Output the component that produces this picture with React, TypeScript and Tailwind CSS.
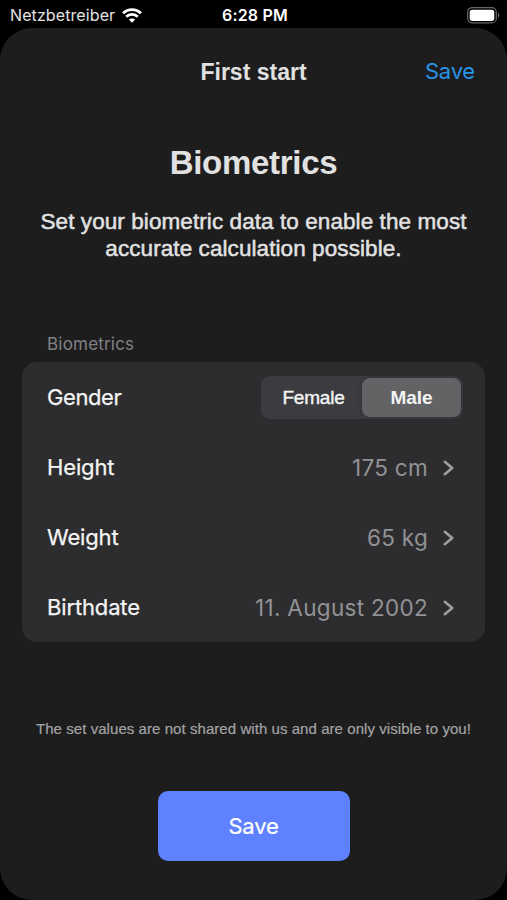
import { useState } from "react";

type RowProps = {
  label: string;
  value: string;
};

const rows: RowProps[] = [
  { label: "Height", value: "175 cm" },
  { label: "Weight", value: "65 kg" },
  { label: "Birthdate", value: "11. August 2002" },
];

function StatusBar() {
  return (
    <div className="grid h-7 grid-cols-3 items-center pt-[2px] pl-[10px] pr-[7px] text-[16px] text-white">
      <div className="flex items-center gap-[7px] whitespace-nowrap">
        <span className="tracking-[0.1px] text-[#e4e4e4]">Netzbetreiber</span>
        <svg width="20" height="15" viewBox="0 0 20 15" fill="none" stroke="white" strokeWidth="2.8">
          <path d="M1 5.3C6 .3 14 .3 19 5.3" />
          <path d="M4.2 8.7c3.3-3.2 8.3-3.2 11.6 0" />
          <path d="M10 14.7 6.9 11.6c1.8-1.6 4.4-1.6 6.2 0Z" fill="white" stroke="none" />
        </svg>
      </div>
      <span className="text-center font-semibold tracking-[0.2px]">6:28 PM</span>
      <svg className="justify-self-end" width="33" height="17" viewBox="0 0 33 17">
        <rect x=".7" y=".7" width="28.6" height="15.2" rx="4.5" fill="none" stroke="#666" strokeWidth="1.2" />
        <rect x="2.7" y="2.7" width="24.6" height="11.2" rx="2.6" fill="white" />
        <path d="M31 5.8c1.8.6 1.8 4.4 0 5Z" fill="#666" />
      </svg>
    </div>
  );
}

function Row({ label, value }: RowProps) {
  return (
    <button className="flex h-[70px] w-full items-center pt-px pl-[25px] pr-[31px] text-[22px]">
      <span className="tracking-[-0.15px] text-[#f4f4f4] [-webkit-text-stroke:0.25px]">{label}</span>
      <span className="ml-auto text-[22.5px] tracking-[0.3px] text-[#929295]">{value}</span>
      <svg className="ml-[15px]" width="11" height="16" viewBox="0 0 11 16" fill="none" stroke="#a0a0a3" strokeWidth="2.5">
        <path d="m1.8 1.7 7.4 6.3-7.4 6.3" strokeLinecap="round" strokeLinejoin="round" />
      </svg>
    </button>
  );
}

export default function App() {
  const [gender, setGender] = useState("Male");

  return (
    <div className="flex h-[900px] w-[507px] flex-col overflow-hidden bg-black font-['Inter',sans-serif]">
      <StatusBar />

      <main className="flex flex-1 flex-col rounded-[32px] bg-[#1d1d1e] text-[#e1e1e1]">
        <header className="grid h-[88px] grid-cols-[1fr_auto_1fr] items-center px-8">
          <h1 className="col-start-2 font-['Liberation_Sans',sans-serif] text-[23px] font-bold">
            First start
          </h1>
          <button className="justify-self-end pb-px text-[22px] tracking-[-0.2px] text-[#2993e5]">Save</button>
        </header>

        <section className="pt-[27px] text-center font-['Liberation_Sans',sans-serif]">
          <h2 className="text-[33px] leading-10 font-bold tracking-[-0.3px]">Biometrics</h2>
          <p className="mt-[25px] text-[22.5px] leading-[27px] tracking-[0.08px] [-webkit-text-stroke:0.5px]">
            Set your biometric data to enable the most
            <br />
            accurate calculation possible.
          </p>
        </section>

        <section className="mx-[22px] mt-[70px]">
          <h3 className="pl-[25px] text-[17px] leading-6 tracking-[0.2px] text-[#818183]">Biometrics</h3>
          <div className="mt-[6px] h-[280px] rounded-[15px] bg-[#2d2d2f]">
            <div className="flex h-[70px] items-center justify-between pl-[25px] pr-[22px] text-[22px] text-[#f4f4f4]">
              <span className="tracking-[-0.4px] [-webkit-text-stroke:0.25px]">Gender</span>
              <div className="grid h-[43px] w-[202px] grid-cols-2 rounded-[9px] bg-[#3c3c40] p-[2px] font-['Liberation_Sans',sans-serif] text-[19px]">
                {["Female", "Male"].map((option) => (
                  <button
                    key={option}
                    className={
                      gender === option
                        ? "rounded-[8px] bg-[#636366] pt-[3px] font-bold shadow-[0_0_5px_rgba(0,0,0,0.25)]"
                        : "pt-[3px] pl-[2px] tracking-[-0.2px] [-webkit-text-stroke:0.4px]"
                    }
                    onClick={() => setGender(option)}
                  >
                    {option}
                  </button>
                ))}
              </div>
            </div>
            {rows.map((row) => (
              <Row key={row.label} {...row} />
            ))}
          </div>
        </section>

        <p className="mt-[77px] text-center font-['Liberation_Sans',sans-serif] text-[15px] leading-5 tracking-[0.06px] text-[#a3a3a4] [-webkit-text-stroke:0.2px]">
          The set values are not shared with us and are only visible to you!
        </p>
        <button className="mx-auto mt-[52px] h-[70px] w-[192px] rounded-[10px] bg-[#5e81ff] text-[22px] tracking-[-0.2px] text-white [-webkit-text-stroke:0.2px]">
          Save
        </button>
      </main>
    </div>
  );
}
